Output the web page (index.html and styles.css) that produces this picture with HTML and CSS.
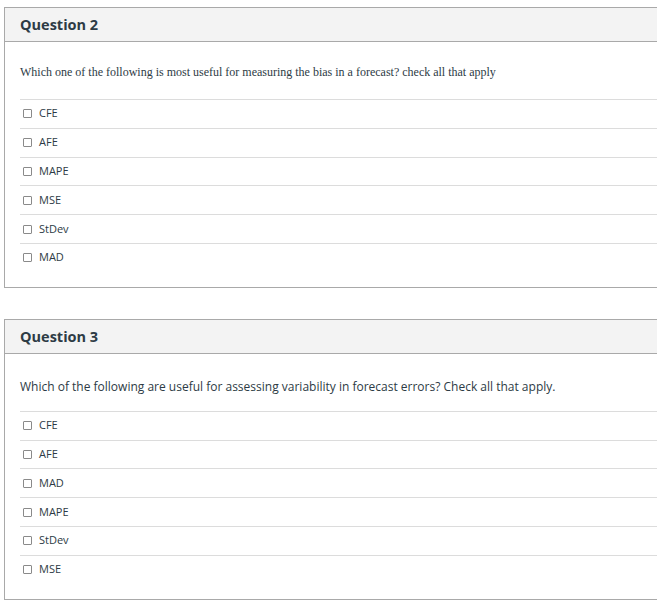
FILE: index.html
```html
<!DOCTYPE html>
<html>
<head>
<meta charset="utf-8">
<link rel="stylesheet" href="styles.css">
</head>
<body>
<div class="page">
  <section class="card">
    <header class="card-head">Question 2</header>
    <div class="card-body">
      <p class="qtext serif">Which one of the following is most useful for measuring the bias in a forecast? check all that apply</p>
      <ul class="answers">
        <li class="answer"><span class="box"></span><span class="label">CFE</span></li>
        <li class="answer"><span class="box"></span><span class="label">AFE</span></li>
        <li class="answer"><span class="box"></span><span class="label">MAPE</span></li>
        <li class="answer"><span class="box"></span><span class="label">MSE</span></li>
        <li class="answer"><span class="box"></span><span class="label">StDev</span></li>
        <li class="answer"><span class="box"></span><span class="label">MAD</span></li>
      </ul>
    </div>
  </section>
  <section class="card">
    <header class="card-head">Question 3</header>
    <div class="card-body">
      <p class="qtext sans">Which of the following are useful for assessing variability in forecast errors? Check all that apply.</p>
      <ul class="answers">
        <li class="answer"><span class="box"></span><span class="label">CFE</span></li>
        <li class="answer"><span class="box"></span><span class="label">AFE</span></li>
        <li class="answer"><span class="box"></span><span class="label">MAD</span></li>
        <li class="answer"><span class="box"></span><span class="label">MAPE</span></li>
        <li class="answer"><span class="box"></span><span class="label">StDev</span></li>
        <li class="answer"><span class="box"></span><span class="label">MSE</span></li>
      </ul>
    </div>
  </section>
</div>
</body>
</html>
```

FILE: styles.css
```css
html, body {
  margin: 0;
  padding: 0;
  overflow: hidden;
  background: #fff;
}
body {
  font-family: "Open Sans", "Liberation Sans", sans-serif;
  color: #2d3b45;
}
.page {
  padding: 7px 0 0 4px;
  display: flex;
  flex-direction: column;
  gap: 31px;
}
.card {
  border: 1px solid #a9a9a9;
  border-right: none;
  background: #fff;
}
.card-head {
  background: #f3f3f3;
  border-bottom: 1px solid #a9a9a9;
  height: 34px;
  box-sizing: border-box;
  padding: 0 0 0 15px;
  display: flex;
  align-items: center;
  font-weight: 700;
  font-size: 14.5px;
  color: #2d3b45;
}
.card-body {
  padding: 0 0 15px 15px;
}
.qtext {
  margin: 0;
  height: 57px;
  display: flex;
  align-items: center;
  padding-top: 4px;
  box-sizing: border-box;
}
.serif {
  font-family: "Liberation Serif", "Times New Roman", serif;
  font-size: 12px;
  color: #2d3b45;
}
.sans {
  font-family: "Open Sans", sans-serif;
  font-size: 12px;
  padding-top: 8px;
}
.answers {
  list-style: none;
  margin: 0;
  padding: 0;
}
.answer {
  border-top: 1px solid #dcdcdc;
  height: 28.8px;
  box-sizing: border-box;
  padding-bottom: 1px;
  display: flex;
  align-items: center;
  font-size: 11px;
  color: #2d3b45;
}
.box {
  width: 9px;
  height: 9px;
  box-sizing: border-box;
  border: 1px solid #8a8a8a;
  border-radius: 1px;
  margin-left: 3px;
  margin-right: 7px;
  margin-top: 1px;
  flex: none;
}
.label {
  line-height: 14px;
}
```
